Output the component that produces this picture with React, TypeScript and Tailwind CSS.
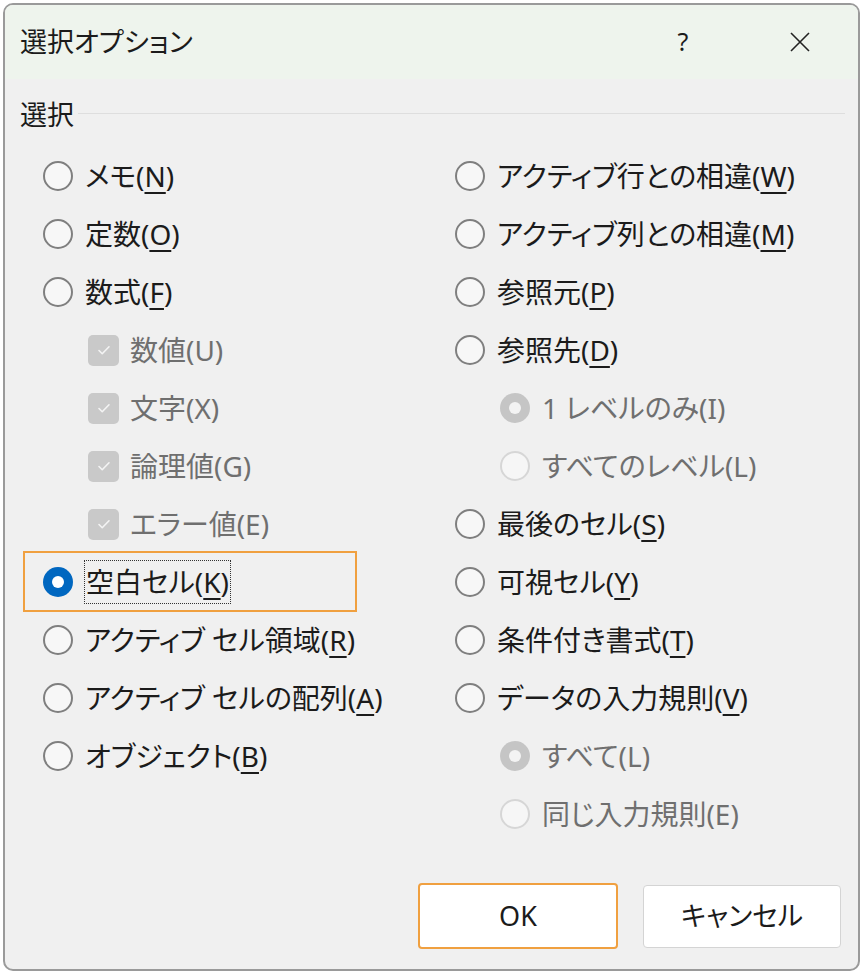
import React from 'react';

type Item = {
  label: string;
  key?: string;
  tail?: string;
  kind: 'radio' | 'check' | 'subradio';
  checked?: boolean;
  disabled?: boolean;
  focused?: boolean;
};

const leftItems: Item[] = [
  { label: 'メモ(', key: 'N', tail: ')', kind: 'radio' },
  { label: '定数(', key: 'O', tail: ')', kind: 'radio' },
  { label: '数式(', key: 'F', tail: ')', kind: 'radio' },
  { label: '数値(U)', kind: 'check', checked: true, disabled: true },
  { label: '文字(X)', kind: 'check', checked: true, disabled: true },
  { label: '論理値(G)', kind: 'check', checked: true, disabled: true },
  { label: 'エラー値(E)', kind: 'check', checked: true, disabled: true },
  { label: '空白セル(', key: 'K', tail: ')', kind: 'radio', checked: true, focused: true },
  { label: 'アクティブ セル領域(', key: 'R', tail: ')', kind: 'radio' },
  { label: 'アクティブ セルの配列(', key: 'A', tail: ')', kind: 'radio' },
  { label: 'オブジェクト(', key: 'B', tail: ')', kind: 'radio' },
];

const rightItems: Item[] = [
  { label: 'アクティブ行との相違(', key: 'W', tail: ')', kind: 'radio' },
  { label: 'アクティブ列との相違(', key: 'M', tail: ')', kind: 'radio' },
  { label: '参照元(', key: 'P', tail: ')', kind: 'radio' },
  { label: '参照先(', key: 'D', tail: ')', kind: 'radio' },
  { label: '1 レベルのみ(I)', kind: 'subradio', checked: true, disabled: true },
  { label: 'すべてのレベル(L)', kind: 'subradio', disabled: true },
  { label: '最後のセル(', key: 'S', tail: ')', kind: 'radio' },
  { label: '可視セル(', key: 'Y', tail: ')', kind: 'radio' },
  { label: '条件付き書式(', key: 'T', tail: ')', kind: 'radio' },
  { label: 'データの入力規則(', key: 'V', tail: ')', kind: 'radio' },
  { label: 'すべて(L)', kind: 'subradio', checked: true, disabled: true },
  { label: '同じ入力規則(E)', kind: 'subradio', disabled: true },
];

const Radio: React.FC<{ checked?: boolean; disabled?: boolean }> = ({ checked, disabled }) => {
  if (checked && !disabled) {
    return (
      <span className="w-[30px] h-[30px] rounded-full bg-[#0067c0] flex items-center justify-center shrink-0">
        <span className="w-[12px] h-[12px] rounded-full bg-white" />
      </span>
    );
  }
  if (checked && disabled) {
    return (
      <span className="w-[30px] h-[30px] rounded-full bg-[#c5c5c5] flex items-center justify-center shrink-0">
        <span className="w-[12px] h-[12px] rounded-full bg-[#f3f3f3]" />
      </span>
    );
  }
  if (disabled) {
    return <span className="w-[30px] h-[30px] rounded-full border-2 border-[#d6d6d6] bg-[#f6f6f6] shrink-0" />;
  }
  return <span className="w-[30px] h-[30px] rounded-full border-2 border-[#7f7f7f] bg-[#f7f7f7] shrink-0" />;
};

const Check: React.FC = () => (
  <span className="w-[31px] h-[31px] rounded-[5px] bg-[#c9c9c9] flex items-center justify-center shrink-0">
    <svg width="16" height="16" viewBox="0 0 16 16" fill="none">
      <path d="M3 8.5l3.2 3.2L13 4.8" stroke="#f4f4f4" strokeWidth="1.6" strokeLinecap="round" strokeLinejoin="round" />
    </svg>
  </span>
);

const Label: React.FC<{ item: Item }> = ({ item }) => {
  const text = (
    <span className={item.disabled ? 'text-[#6f6f6f]' : 'text-[#1b1b1b]'}>
      {item.label}
      {item.key && <span className="underline underline-offset-[5px] decoration-[1.5px]">{item.key}</span>}
      {item.tail}
    </span>
  );
  if (item.focused) {
    return <span className="outline outline-1 outline-dotted outline-[#333] px-[1px] leading-[42px] inline-block">{text}</span>;
  }
  return text;
};

const Row: React.FC<{ item: Item }> = ({ item }) => {
  const pad = item.kind === 'radio' ? 'pl-[20px]' : 'pl-[65px]';
  return (
    <div className={`relative h-[58px] flex items-center ${pad}`}>
      {item.focused && (
        <span className="absolute left-0 top-[-2px] bottom-[-1px] w-[334px] border-2 border-[#f0a040] pointer-events-none" />
      )}
      {item.kind === 'check' ? <Check /> : <Radio checked={item.checked} disabled={item.disabled} />}
      <span className={item.kind === 'check' ? 'ml-[11px]' : 'ml-[12px]'}>
        <Label item={item} />
      </span>
    </div>
  );
};

const App: React.FC = () => {
  return (
    <div className="w-[863px] h-[975px] bg-white pt-[3px] pl-[3px] font-['Noto_Sans','Noto_Sans_CJK_JP',sans-serif] [font-feature-settings:'palt']">
      <div className="w-[857px] h-[968px] rounded-[10px] border-2 border-[#9a9a9a] overflow-hidden bg-[#f0f0f0] flex flex-col">
        {/* title bar */}
        <div className="h-[74px] bg-[#eef4ed] flex items-center pl-[15px] shrink-0">
          <span className="text-[27px] text-[#1b1b1b]">選択オプション</span>
          <span className="ml-auto text-[25px] text-[#1b1b1b] w-[20px] text-center mr-[96px]">?</span>
          <svg width="22" height="22" viewBox="0 0 22 22" className="mr-[47px]">
            <path d="M2 2L20 20M20 2L2 20" stroke="#222" strokeWidth="1.6" />
          </svg>
        </div>

        {/* body */}
        <div className="flex-1 flex flex-col px-[15px] pt-[21px]">
          <div className="flex items-center h-[30px]">
            <span className="text-[27px] text-[#1b1b1b] leading-[30px]">選択</span>
            <span className="flex-1 h-px bg-[#dedede] ml-[4px] mr-[-2px] mt-[-4px]" />
          </div>

          <div className="flex ml-[3px] mt-[17px] text-[28px] leading-none">
            <div className="w-[412px] flex flex-col">
              {leftItems.map((it) => (
                <Row key={it.label} item={it} />
              ))}
            </div>
            <div className="flex-1 flex flex-col">
              {rightItems.map((it) => (
                <Row key={it.label} item={it} />
              ))}
            </div>
          </div>

          <div className="flex justify-end gap-[25px] mt-[40px] pr-[2px]">
            <button className="w-[200px] h-[66px] rounded-[4px] border-2 border-[#f0a040] bg-white text-[27px] text-[#1b1b1b]">
              OK
            </button>
            <button className="w-[198px] h-[63px] mt-[2px] rounded-[4px] border border-[#d4d4d4] bg-white text-[27px] text-[#1b1b1b]">
              キャンセル
            </button>
          </div>
        </div>
      </div>
    </div>
  );
};

export default App;
